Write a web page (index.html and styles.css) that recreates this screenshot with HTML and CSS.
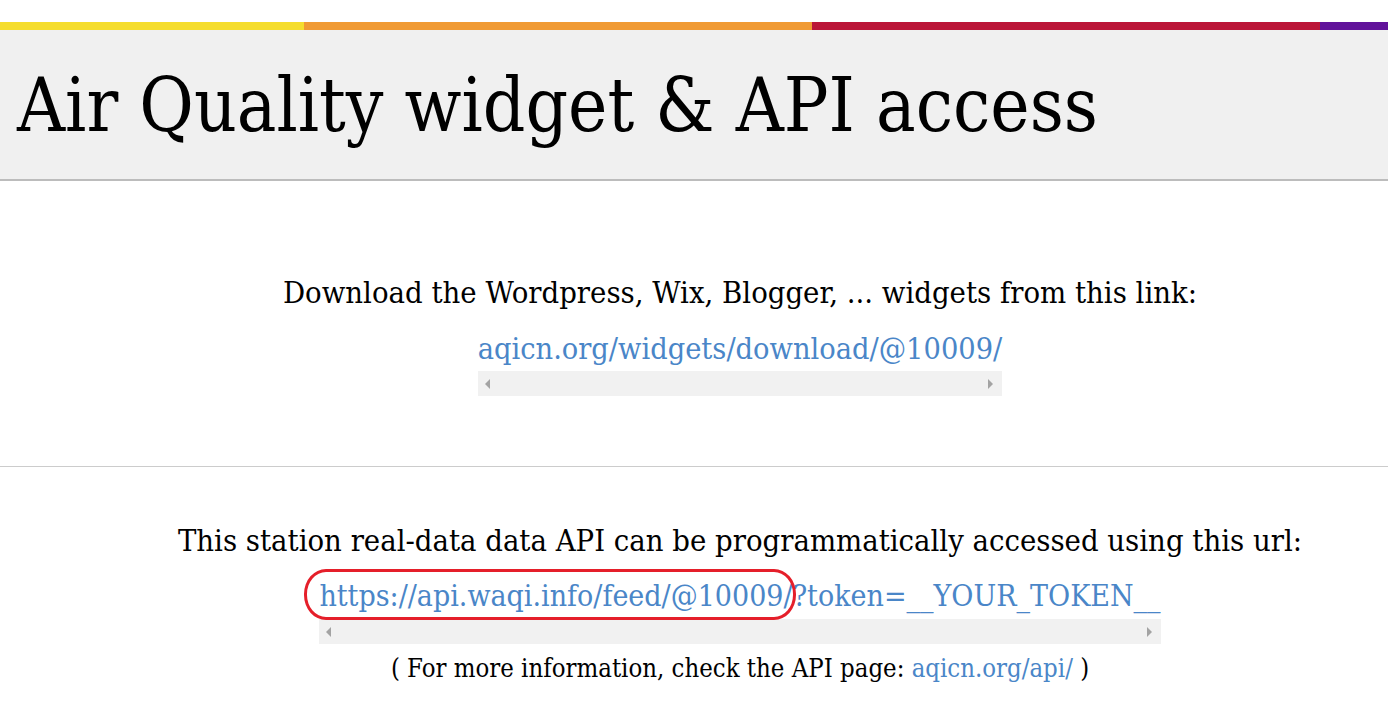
FILE: index.html
```html
<!DOCTYPE html>
<html>
<head>
<meta charset="utf-8">
<link rel="stylesheet" href="styles.css">
</head>
<body>
<div class="colorbar">
  <span class="c1"></span><span class="c2"></span><span class="c3"></span><span class="c4"></span>
</div>
<header class="head">
  <h1 class="title">Air Quality widget &amp; API access</h1>
</header>
<main class="content">
  <section class="block first">
    <p class="lead">Download the Wordpress, Wix, Blogger, ... widgets from this link:</p>
    <div class="scroller">
      <a class="link big" href="#">aqicn.org/widgets/download/@10009/</a>
      <div class="sbar"><span class="arr left"></span><span class="arr right"></span></div>
    </div>
  </section>
  <hr class="sep">
  <section class="block second">
    <p class="lead">This station real-data data API can be programmatically accessed using this url:</p>
    <div class="scroller url-scroller">
      <div class="urlline">
        <a class="link big url" href="#"><span class="circled">https://api.waqi.info/feed/@10009<span class="ring"></span></span>/?token=__YOUR_TOKEN__</a>
      </div>
      <div class="sbar"><span class="arr left"></span><span class="arr right"></span></div>
    </div>
    <p class="note">( For more information, check the API page: <a class="link" href="#">aqicn.org/api/</a> )</p>
  </section>
</main>
</body>
</html>
```
FILE: styles.css
```css
html, body {
  margin: 0;
  padding: 0;
  background: #ffffff;
}
body {
  font-family: "DejaVu Serif", "Liberation Serif", serif;
  font-stretch: condensed;
  color: #000;
}
.colorbar {
  display: flex;
  margin-top: 22px;
  height: 8px;
}
.colorbar span { display: block; height: 8px; }
.c1 { width: 304px; background: #f5dd2d; }
.c2 { width: 508px; background: #f09a34; }
.c3 { width: 508px; background: #bb1538; }
.c4 { flex: 1; background: #61129a; }
.head {
  background: #f0f0f0;
  border-bottom: 2px solid #bcbcbc;
  height: 149px;
  display: flex;
  align-items: center;
}
.title {
  margin: 0 0 0 17px;
  font-weight: normal;
  font-size: 74px;
  line-height: 1;
  letter-spacing: 0;
}
.block {
  padding-left: 92px;
  text-align: center;
}
.block.first { padding-top: 92px; padding-bottom: 70px; }
.block.second { padding-top: 54px; }
.lead {
  margin: 0;
  font-size: 30.7px;
  line-height: 40px;
}
.scroller {
  display: inline-flex;
  flex-direction: column;
  align-items: stretch;
  margin-top: 14px;
}
.url-scroller { margin-top: 12px; }
.link {
  color: #4a86c8;
  text-decoration: none;
}
.big {
  font-size: 30.4px;
  line-height: 44px;
  white-space: nowrap;
}
.big.url { font-size: 30px; line-height: 46px; }
.sbar {
  height: 25px;
  background: #f1f1f1;
  display: flex;
  justify-content: space-between;
  align-items: center;
  padding: 0 9px 0 7px;
}
.arr {
  width: 0;
  height: 0;
  border-top: 5px solid transparent;
  border-bottom: 5px solid transparent;
}
.arr.left { border-right: 5px solid #a3a3a3; }
.arr.right { border-left: 5px solid #a3a3a3; }
.sep {
  margin: 0;
  border: 0;
  border-top: 1px solid #cccccc;
}
.urlline { position: relative; }
.circled { position: relative; }
.ring {
  position: absolute;
  left: -15px;
  right: -12px;
  top: -9px;
  bottom: -7px;
  border: 3px solid #e51f2a;
  border-radius: 22px / 25px;
}
.note {
  margin: 8px 0 0;
  font-size: 25.5px;
  line-height: 32px;
}
```
